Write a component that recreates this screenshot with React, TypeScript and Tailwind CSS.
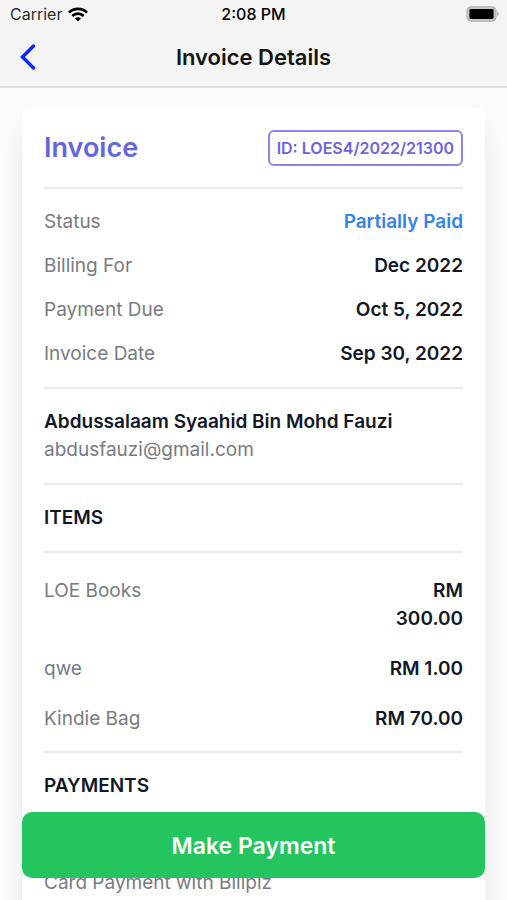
import type { ReactNode } from "react";

const details = [
    { label: "Status", value: "Partially Paid", color: "text-[#3582e8]" },
    { label: "Billing For", value: "Dec 2022", color: "text-gray-900" },
    { label: "Payment Due", value: "Oct 5, 2022", color: "text-gray-900" },
    { label: "Invoice Date", value: "Sep 30, 2022", color: "text-gray-900" },
];

const items = [
    { name: "LOE Books", price: "RM 300.00" },
    { name: "qwe", price: "RM 1.00" },
    { name: "Kindie Bag", price: "RM 70.00" },
];

const StatusBar = () => (
    <div className="grid grid-cols-3 items-center h-7 px-2 text-base text-black">
        <div className="flex items-center gap-1.5 pl-0.5 text-[#2e2e2e]">
            Carrier
            {/* Wifi */}
            <svg viewBox="0 0 20 15" className="w-5 h-[15px]" fill="none" stroke="black" strokeWidth="2.7">
                <path d="M1 5.6a12.8 12.8 0 0 1 18 0M4.3 9a8 8 0 0 1 11.4 0" />
                <path d="M10 14.6 7 11.6a4.3 4.3 0 0 1 6 0Z" fill="black" stroke="none" />
            </svg>
        </div>
        <div className="text-center font-medium">2:08 PM</div>
        {/* Battery */}
        <svg viewBox="0 0 33 16" className="w-[33px] h-4 justify-self-end">
            <rect x="1" y="0.8" width="29" height="14.4" rx="4.2" fill="#c8c8c8" stroke="#b2b2b2" strokeWidth="1.2" />
            <rect x="3.4" y="3" width="24.2" height="10" rx="1.4" fill="black" />
            <path d="M31.3 5.6c1.7.7 1.7 4.1 0 4.8Z" fill="#a3a3a3" />
        </svg>
    </div>
);

const Heading = ({ children }: { children: ReactNode }) => (
    <h3 className="font-semibold text-gray-900">{children}</h3>
);

const App = () => {
    return (
        <div className="h-screen overflow-hidden flex flex-col bg-[#fafafa] font-['Inter',sans-serif]">
            <header className="shrink-0 bg-[#f4f4f4] border-b-2 border-[#dedede]">
                <StatusBar />
                <div className="grid grid-cols-[40px_1fr_40px] items-center h-[58px] px-2">
                    <button type="button" aria-label="Back" className="flex justify-center">
                        <svg viewBox="0 0 16 26" className="w-4 h-[26px]" fill="none" stroke="#0a24ff" strokeWidth="3.4" strokeLinecap="round">
                            <path d="M13.5 2 2.5 13l11 11" />
                        </svg>
                    </button>
                    <h1 className="text-center text-[22px] font-semibold text-[#141414]">Invoice Details</h1>
                </div>
            </header>

            <main className="relative flex-1 min-h-0 px-[22px] pt-5">
                <div className="bg-white rounded-lg shadow-xl px-[22px] text-[19px] leading-7">
                    <div className="flex items-center justify-between pt-px h-[81px] border-b-2 border-[#ebebec]">
                        <h2 className="text-[27px] font-semibold text-[#6366e0]">Invoice</h2>
                        <span className="rounded-md border-2 border-[#8b85ec] px-[7px] py-1 text-base leading-6 font-semibold text-[#6b63e0]">
                            ID: LOES4/2022/21300
                        </span>
                    </div>

                    <dl className="flex flex-col gap-4 py-[19px] border-b-2 border-[#ebebec]">
                        {details.map((row) => (
                            <div key={row.label} className="flex justify-between">
                                <dt className="text-[#777b84]">{row.label}</dt>
                                <dd className={`font-semibold ${row.color}`}>{row.value}</dd>
                            </div>
                        ))}
                    </dl>

                    <div className="py-[19px] border-b-2 border-[#ebebec]">
                        <Heading>Abdussalaam Syaahid Bin Mohd Fauzi</Heading>
                        <p className="text-[#777b84]">abdusfauzi@gmail.com</p>
                    </div>

                    <div className="py-[19px] border-b-2 border-[#ebebec]">
                        <Heading>ITEMS</Heading>
                    </div>

                    <ul className="flex flex-col gap-[22px] pt-6 pb-[18px] border-b-2 border-[#ebebec]">
                        {items.map((item) => (
                            <li key={item.name} className="flex justify-between">
                                <span className="text-[#777b84]">{item.name}</span>
                                <span className="w-24 text-right font-semibold text-gray-900">{item.price}</span>
                            </li>
                        ))}
                    </ul>

                    <div className="py-[19px] border-b-2 border-[#ebebec]">
                        <Heading>PAYMENTS</Heading>
                    </div>
                    <p className="pt-12 pb-6 text-[#777b84]">Card Payment with Billplz</p>
                </div>

                {/* Floating action over the scrolled card */}
                <button
                    type="button"
                    className="absolute inset-x-[22px] bottom-[22px] h-[66px] pt-0.5 rounded-[10px] bg-[#24c55e] text-[23px] font-semibold text-white"
                >
                    Make Payment
                </button>
            </main>
        </div>
    );
};

export default App;
